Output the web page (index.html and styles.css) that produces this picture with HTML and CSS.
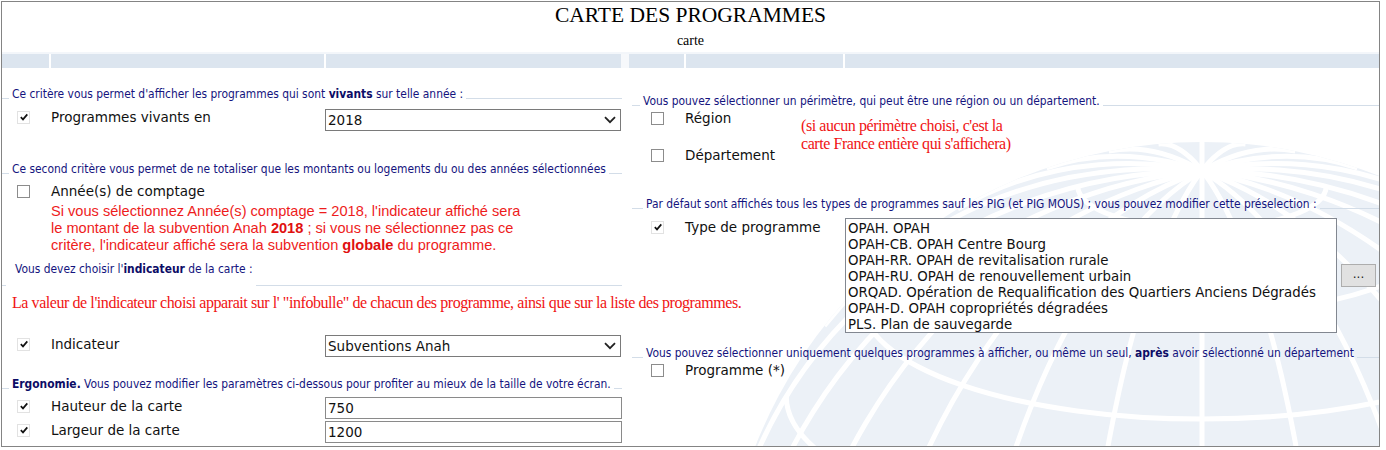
FILE: index.html
```html
<!DOCTYPE html>
<html lang="fr">
<head>
<meta charset="utf-8">
<title>Carte des programmes</title>
<link rel="stylesheet" href="styles.css">
</head>
<body>
<div class="page">
  <svg class="globe" width="1377" height="444" viewBox="0 0 1377 444" aria-hidden="true">
    <defs>
      <clipPath id="gclip"><circle cx="1200" cy="620" r="480"/></clipPath>
    </defs>
    <circle cx="1200" cy="620" r="480" fill="#ecf1f7"/>
    <g clip-path="url(#gclip)" fill="none" stroke="#ffffff" stroke-width="5">
      <line x1="1200" y1="140" x2="1200" y2="1100"/>
      <g transform="translate(1200 620)">
        <path transform="rotate(-5.2)" d="M0 -480 A116.8 480 0 0 1 0 480"/>
        <path transform="rotate(-11.2)" d="M0 -480 A225.6 480 0 0 1 0 480"/>
        <path transform="rotate(-18.9)" d="M0 -480 A319 480 0 0 1 0 480"/>
        <path transform="rotate(-30.6)" d="M0 -480 A390.7 480 0 0 1 0 480"/>
        <path transform="rotate(-51.9)" d="M0 -480 A435.8 480 0 0 1 0 480"/>
        <path transform="rotate(5.2)" d="M0 -480 A116.8 480 0 0 0 0 480"/>
        <path transform="rotate(11.2)" d="M0 -480 A225.6 480 0 0 0 0 480"/>
        <path transform="rotate(18.9)" d="M0 -480 A319 480 0 0 0 0 480"/>
        <path transform="rotate(30.6)" d="M0 -480 A390.7 480 0 0 0 0 480"/>
        <path transform="rotate(51.9)" d="M0 -480 A435.8 480 0 0 0 0 480"/>
        <path d="M-480 0 A480 451 0 0 1 480 0"/>
      </g>
      <path d="M720 620 A480 164 0 0 0 1680 620"/>
      <path d="M736.4 503.2 A463.6 158.6 0 0 0 1663.6 503.2"/>
      <path d="M784.3 394.4 A415.7 142.2 0 0 0 1615.7 394.4"/>
      <path d="M860.6 301 A339.4 116.1 0 0 0 1539.4 301"/>
      <path d="M960 229.3 A240 82 0 0 0 1440 229.3"/>
      <path d="M1075.8 184.2 A124.2 42.5 0 0 0 1324.2 184.2"/>
    </g>
  </svg>

  <div class="content">
    <h1 class="title">CARTE DES PROGRAMMES</h1>
    <div class="subtitle">carte</div>

    <div class="hbar">
      <div class="hgroup">
        <span class="hcell w47"></span>
        <span class="hcell w272"></span>
        <span class="hcell w295"></span>
      </div>
      <div class="hgap"></div>
      <div class="hgroup grow">
        <span class="hcell w55"></span>
        <span class="hcell w157"></span>
        <span class="hcell grow"></span>
      </div>
    </div>

    <div class="main">
      <div class="col col-left">
        <div class="legend lg1">
          <span class="lline lead"></span>
          <span class="ltext">Ce critère vous permet d'afficher les programmes qui sont <b>vivants</b> sur telle année :</span>
          <span class="lline fill"></span>
        </div>
        <div class="row r-vivants">
          <span class="cbcell"><span class="cb on"><svg viewBox="0 0 10 10" width="10" height="10"><path d="M1.8 5.2 L4 7.4 L8.3 2.4" fill="none" stroke="#111" stroke-width="1.7"/></svg></span></span>
          <span class="label">Programmes vivants en</span>
          <span class="select">2018<svg class="chev" viewBox="0 0 12 8" width="12" height="8"><path d="M1 1.2 L6 6.2 L11 1.2" fill="none" stroke="#222" stroke-width="1.8"/></svg></span>
        </div>

        <div class="legend lg2">
          <span class="lline lead"></span>
          <span class="ltext">Ce second critère vous permet de ne totaliser que les montants ou logements du ou des années sélectionnées</span>
          <span class="lline fill"></span>
        </div>
        <div class="row r-comptage">
          <span class="cbcell"><span class="cb"></span></span>
          <span class="label">Année(s) de comptage</span>
        </div>
        <div class="rednote">Si vous sélectionnez Année(s) comptage = 2018, l'indicateur affiché sera<br>le montant de la subvention Anah <b>2018</b> ; si vous ne sélectionnez pas ce<br>critère, l'indicateur affiché sera la subvention <b>globale</b> du programme.</div>

        <div class="legend lg3">
          <span class="lline lead"></span>
          <span class="ltext">Vous devez choisir l'<b>indicateur</b> de la carte :</span>
          <span class="lline fill"></span>
        </div>
        <div class="timesnote">La valeur de l'indicateur choisi apparait sur l' "infobulle" de chacun des programme, ainsi que sur la liste des programmes.</div>
        <div class="row r-indic">
          <span class="cbcell"><span class="cb on"><svg viewBox="0 0 10 10" width="10" height="10"><path d="M1.8 5.2 L4 7.4 L8.3 2.4" fill="none" stroke="#111" stroke-width="1.7"/></svg></span></span>
          <span class="label">Indicateur</span>
          <span class="select sel-indic">Subventions Anah<svg class="chev" viewBox="0 0 12 8" width="12" height="8"><path d="M1 1.2 L6 6.2 L11 1.2" fill="none" stroke="#222" stroke-width="1.8"/></svg></span>
        </div>

        <div class="legend lg4">
          <span class="lline lead"></span>
          <span class="ltext"><b>Ergonomie.</b> Vous pouvez modifier les paramètres ci-dessous pour profiter au mieux de la taille de votre écran.</span>
          <span class="lline fill"></span>
        </div>
        <div class="row r-haut">
          <span class="cbcell"><span class="cb on"><svg viewBox="0 0 10 10" width="10" height="10"><path d="M1.8 5.2 L4 7.4 L8.3 2.4" fill="none" stroke="#111" stroke-width="1.7"/></svg></span></span>
          <span class="label">Hauteur de la carte</span>
          <span class="input">750</span>
        </div>
        <div class="row r-larg">
          <span class="cbcell"><span class="cb on"><svg viewBox="0 0 10 10" width="10" height="10"><path d="M1.8 5.2 L4 7.4 L8.3 2.4" fill="none" stroke="#111" stroke-width="1.7"/></svg></span></span>
          <span class="label">Largeur de la carte</span>
          <span class="input">1200</span>
        </div>
      </div>

      <div class="col col-right">
        <div class="legend rlg1">
          <span class="lline lead short"></span>
          <span class="ltext">Vous pouvez sélectionner un périmètre, qui peut être une région ou un département.</span>
          <span class="lline fill"></span>
        </div>
        <div class="perim">
          <div class="perim-rows">
            <div class="row rrow">
              <span class="cbcell"><span class="cb"></span></span>
              <span class="label">Région</span>
            </div>
            <div class="row rrow r-dept">
              <span class="cbcell"><span class="cb"></span></span>
              <span class="label">Département</span>
            </div>
          </div>
          <div class="perim-note">(si aucun périmètre choisi, c'est la<br>carte France entière qui s'affichera)</div>
        </div>

        <div class="legend rlg2">
          <span class="lline lead"></span>
          <span class="ltext">Par défaut sont affichés tous les types de programmes sauf les PIG (et PIG MOUS) ; vous pouvez modifier cette préselection :</span>
          <span class="lline fill"></span>
        </div>
        <div class="row rrow r-type">
          <span class="cbcell"><span class="cb on"><svg viewBox="0 0 10 10" width="10" height="10"><path d="M1.8 5.2 L4 7.4 L8.3 2.4" fill="none" stroke="#111" stroke-width="1.7"/></svg></span></span>
          <span class="label tlabel">Type de programme</span>
          <div class="listbox">
            <div>OPAH. OPAH</div>
            <div>OPAH-CB. OPAH Centre Bourg</div>
            <div>OPAH-RR. OPAH de revitalisation rurale</div>
            <div>OPAH-RU. OPAH de renouvellement urbain</div>
            <div>ORQAD. Opération de Requalification des Quartiers Anciens Dégradés</div>
            <div>OPAH-D. OPAH copropriétés dégradées</div>
            <div>PLS. Plan de sauvegarde</div>
          </div>
          <span class="btn">...</span>
        </div>

        <div class="legend rlg3">
          <span class="lline lead"></span>
          <span class="ltext">Vous pouvez sélectionner uniquement quelques programmes à afficher, ou même un seul, <b>après</b> avoir sélectionné un département</span>
          <span class="lline fill"></span>
        </div>
        <div class="row rrow r-prog">
          <span class="cbcell"><span class="cb"></span></span>
          <span class="label">Programme (*)</span>
        </div>
      </div>
    </div>
  </div>
</div>
</body>
</html>
```
FILE: styles.css
```css
html, body {
  margin: 0;
  padding: 0;
  background: #ffffff;
}
body {
  padding: 1px 0 0 1px;
  font-family: "DejaVu Sans", Verdana, sans-serif;
  color: #111;
}
.page {
  position: relative;
  width: 1377px;
  height: 444px;
  border: 1px solid #848484;
  overflow: hidden;
  background: #fff;
}
.globe {
  position: absolute;
  left: 0;
  top: 0;
  z-index: 0;
}
.content {
  position: relative;
  z-index: 1;
}
.title {
  margin: 0;
  padding-top: 1px;
  height: 27px;
  text-align: center;
  font: normal 21.5px/25px "Liberation Serif", "Times New Roman", serif;
  color: #000;
}
.subtitle {
  text-align: center;
  font: 14px/16px "Liberation Serif", "Times New Roman", serif;
  color: #000;
  padding-top: 3px;
  height: 17px;
}
.hbar {
  display: flex;
  margin-top: 2px;
  border-top: 2px solid #f3f6fa;
  height: 14px;
}
.hgroup {
  display: flex;
  gap: 2px;
}
.hgroup.grow { flex: 1; }
.hgap {
  width: 8px;
  background: #f6f8fb;
}
.hcell {
  display: block;
  height: 14px;
  background: #dce5ef;
}
.hcell.grow { flex: 1; }
.w47 { width: 47px; }
.w272 { width: 273px; }
.w295 { width: 295px; }
.w55 { width: 55px; }
.w157 { width: 157px; }

.main {
  display: flex;
}
.col-left {
  width: 620px;
}
.col-right {
  flex: 1;
  margin-left: 6px;
}

/* legends (fieldset headers) */
.legend {
  display: flex;
  align-items: flex-end;
  height: 14px;
}
.ltext {
  font: 11.9px/14px "DejaVu Sans Condensed", "DejaVu Sans", sans-serif;
  color: #14147e;
  white-space: nowrap;
  padding: 0 3px;
}
.ltext b {
  color: #0c0c66;
}
.lline {
  display: block;
  height: 1px;
  background: #d3dde8;
  margin-bottom: 2px;
}
.lline.lead { width: 7px; }
.lline.fill { flex: 1; }
.col-right .lline.lead { width: 11px; margin-left: 4px; }
.col-right .lline.lead.short { width: 8px; }

.lg1 { margin-top: 19px; }
.lg2 { margin-top: 31px; }
.lg3 {
  margin-top: 8px;
  height: 30px;
  align-items: flex-start;
}
.lg3 .lline { margin-top: 23px; margin-bottom: 0; }
.lg3 .lline.lead { width: 4px; margin-right: 6px; }
.lg4 { margin-top: 20px; }

/* rows */
.row {
  display: flex;
  align-items: flex-start;
}
.cbcell {
  display: flex;
  align-items: center;
  width: 49px;
  height: 18px;
  flex: none;
}
.cb {
  display: flex;
  align-items: center;
  justify-content: center;
  box-sizing: border-box;
  width: 13px;
  height: 13px;
  margin-left: 15px;
  border: 1px solid #8c8c8c;
  background: #fff;
}
.cb.on {
  border-color: #e2e2e2;
}
.label {
  width: 274px;
  flex: none;
  font-size: 13.5px;
  line-height: 18px;
  color: #111;
  white-space: nowrap;
}
.select {
  position: relative;
  box-sizing: border-box;
  width: 296px;
  height: 22px;
  margin-top: 1px;
  border: 1px solid #7a7a7a;
  background: #fff;
  padding: 0 0 0 2px;
  font-size: 13.5px;
  line-height: 20px;
  color: #111;
}
.chev {
  position: absolute;
  right: 4px;
  top: 6px;
}
.sel-indic { height: 22px; line-height: 20px; margin-top: 0; }
.input {
  box-sizing: border-box;
  width: 298px;
  height: 22px;
  border: 1px solid #8a8a8a;
  background: #fff;
  padding-left: 2px;
  font-size: 13.5px;
  line-height: 20px;
  color: #111;
}

.r-vivants { margin-top: 7px; }
.r-comptage { margin-top: 6px; }
.rednote {
  margin-top: 3px;
  padding-left: 49px;
  font: 14.6px/17px "Liberation Sans", Arial, sans-serif;
  color: #ee1c1c;
  white-space: nowrap;
}
.rednote b { color: #e01010; }
.timesnote {
  margin-top: 2px;
  padding-left: 10px;
  font: 16px/18px "Liberation Serif", "Times New Roman", serif;
  letter-spacing: -0.43px;
  color: #f01414;
  white-space: nowrap;
}
.r-indic { margin-top: 23px; }
.r-haut { margin-top: 6px; }
.r-larg { margin-top: 2px; }

/* right column */
.rlg1 { margin-top: 26px; }
.rrow .cbcell { width: 57px; }
.rrow .cb { margin-left: 23px; }
.rrow .label { width: auto; }
.perim {
  display: flex;
  margin-top: 1px;
}
.perim-rows {
  width: 173px;
  flex: none;
}
.r-dept { margin-top: 19px; }
.perim-note {
  margin-top: 8px;
  font: 16px/18px "Liberation Serif", "Times New Roman", serif;
  letter-spacing: -0.43px;
  color: #f01414;
  white-space: nowrap;
}
.rlg2 { margin-top: 33px; }
.r-type {
  margin-top: 7px;
}
.tlabel {
  width: 160px !important;
  flex: none;
}
.listbox {
  box-sizing: border-box;
  width: 492px;
  height: 115px;
  border: 1px solid #828790;
  background: #fff;
  padding: 2px 2px 1px;
  font-size: 13.35px;
  line-height: 16px;
  color: #111;
  white-space: nowrap;
  overflow: hidden;
}
.btn {
  box-sizing: border-box;
  width: 35px;
  height: 23px;
  margin: 46px 0 0 4px;
  border: 1px solid #adadad;
  background: #e1e1e1;
  font: 12px/19px "DejaVu Sans", sans-serif;
  text-align: center;
  color: #222;
}
.rlg3 { margin-top: 13px; }
.r-prog { margin-top: 1px; }
```
